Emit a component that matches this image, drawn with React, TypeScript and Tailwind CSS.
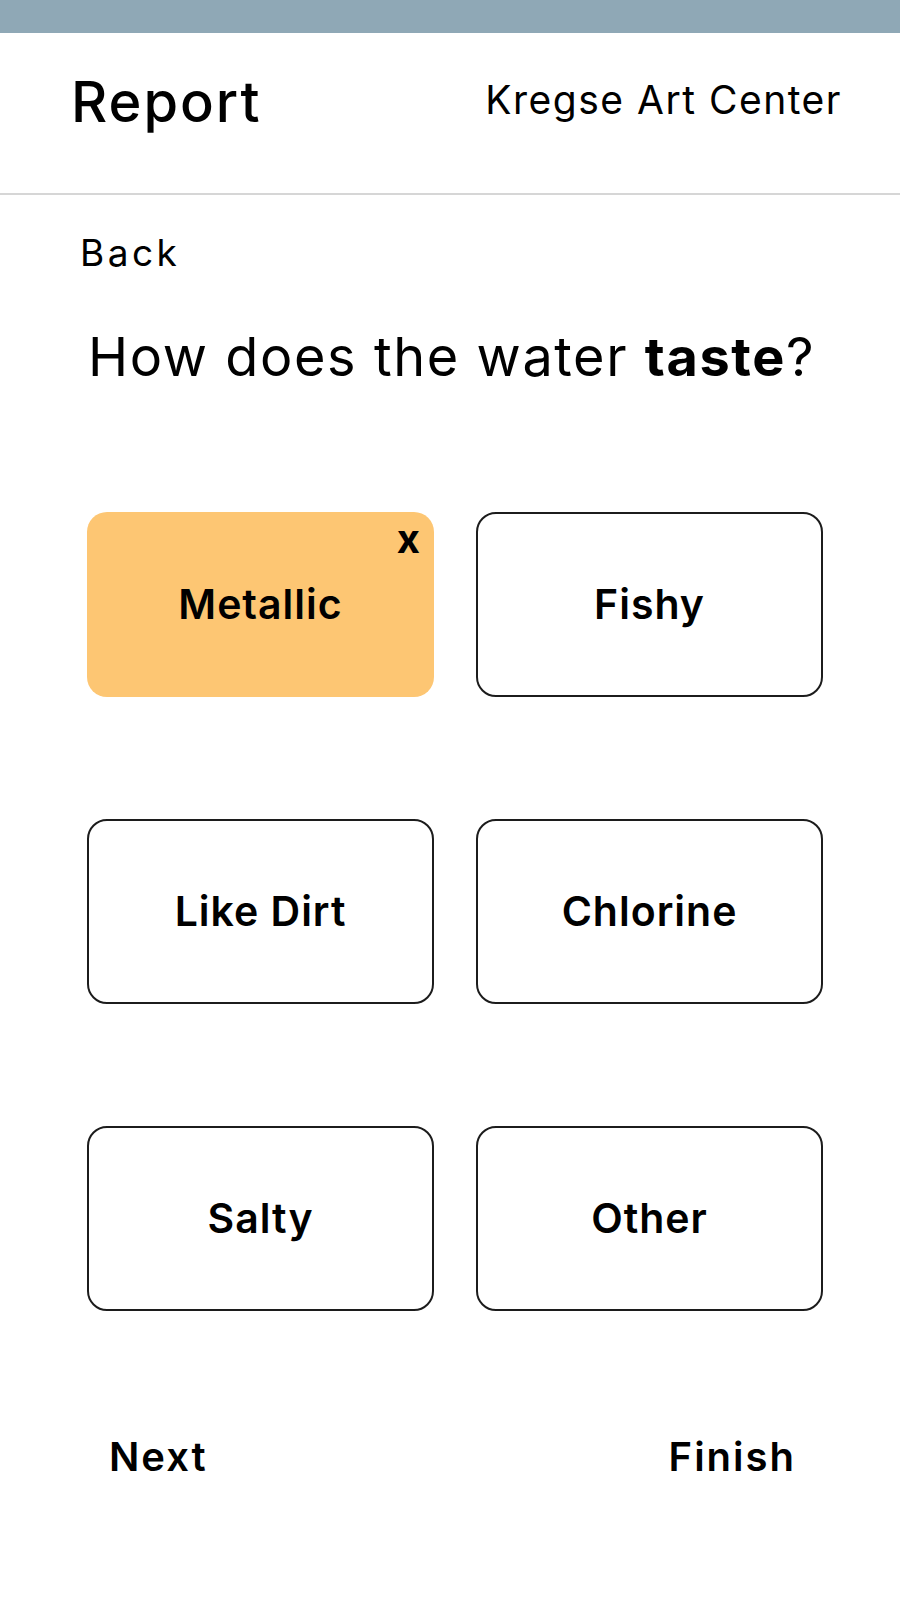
import React, { useState } from 'react';

const options = ['Metallic', 'Fishy', 'Like Dirt', 'Chlorine', 'Salty', 'Other'];

const App = () => {
  const [selected, setSelected] = useState<string[]>(['Metallic']);

  const toggle = (name: string) => {
    setSelected(prev =>
      prev.includes(name) ? prev.filter(n => n !== name) : [...prev, name]
    );
  };

  return (
    <div
      className="w-[900px] h-[1600px] bg-white text-black"
      style={{ fontFamily: 'Inter, "Noto Sans", sans-serif' }}
    >
      {/* status bar */}
      <div className="h-[33px] bg-[#8fa8b6]" />

      {/* header */}
      <header className="h-[162px] flex items-center justify-between pl-[71px] pr-[58px] pb-[28px] border-b-2 border-[#d6d6d6]">
        <h1 className="pt-[6px] text-[56px] leading-none font-medium tracking-[2px]">Report</h1>
        <div className="text-[39px] leading-none font-normal tracking-[1.5px]">Kregse Art Center</div>
      </header>

      <div className="pt-[39px]">
        <button className="ml-[80px] text-[37px] leading-none font-normal tracking-[3.5px]">Back</button>

        <h2 className="mt-[58px] ml-[88px] text-[54px] leading-none font-normal tracking-[1.6px]">
          How does the water <span className="font-bold">taste</span>?
        </h2>

        {/* options */}
        <div className="mt-[128px] ml-[87px] w-[736px] grid grid-cols-2 gap-x-[42px] gap-y-[122px]">
          {options.map(name => {
            const isOn = selected.includes(name);
            return (
              <button
                key={name}
                onClick={() => toggle(name)}
                className={`relative h-[185px] rounded-[20px] flex items-center justify-center text-[41px] leading-none font-semibold tracking-[1px] ${
                  isOn ? 'bg-[#fdc673]' : 'bg-white border-2 border-[#1c1c1c]'
                }`}
              >
                {name}
                {isOn && (
                  <span className="absolute top-[7px] right-[13px] text-[40px] leading-none font-bold">x</span>
                )}
              </button>
            );
          })}
        </div>

        {/* footer nav */}
        <div className="mt-[126px] flex justify-between pl-[109px] pr-[104px]">
          <button className="text-[40px] leading-none font-semibold tracking-[2px]">Next</button>
          <button className="text-[40px] leading-none font-semibold tracking-[2px]">Finish</button>
        </div>
      </div>
    </div>
  );
};

export default App;
